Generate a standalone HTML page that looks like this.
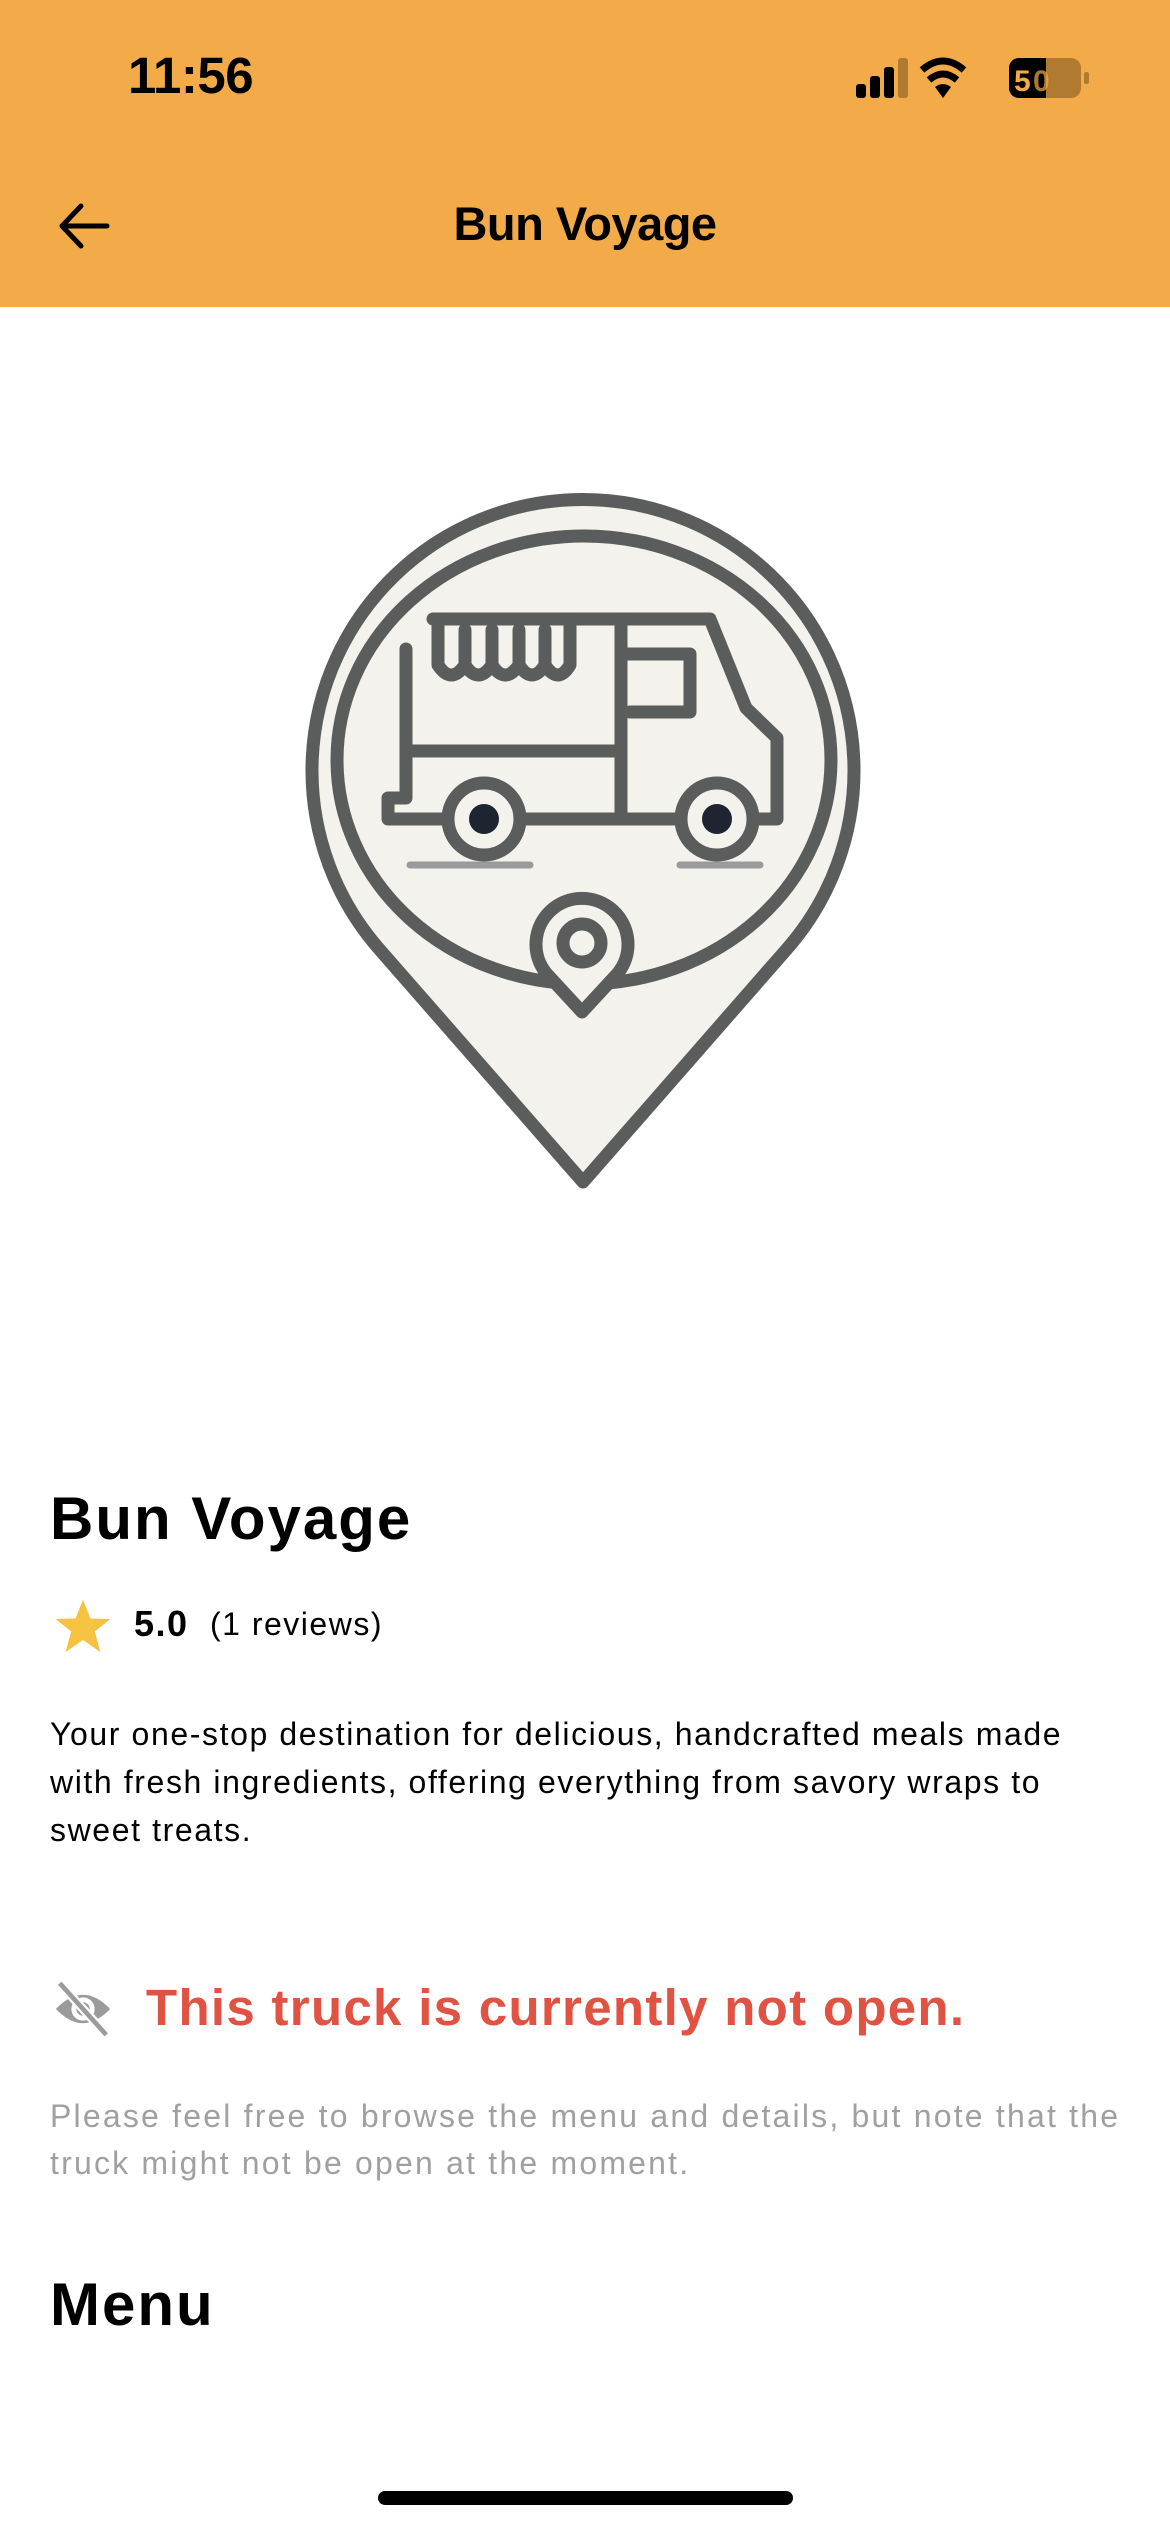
<!DOCTYPE html>
<html><head><meta charset="utf-8"><style>
*{margin:0;padding:0;box-sizing:border-box}
body{width:1170px;height:2532px;background:#fff;position:relative;overflow:hidden;font-family:"Liberation Sans",sans-serif;color:#000}
.hdr{position:absolute;left:0;top:0;width:1170px;height:307px;background:#F2AB48}
.abs{position:absolute}
</style></head><body>
<div class="hdr"></div>
<div class="abs" style="left:128px;top:46px;font-size:51px;font-weight:bold;letter-spacing:-0.5px">11:56</div>
<svg class="abs" style="left:850px;top:54px" width="250" height="50" viewBox="0 0 250 50">
 <rect x="6" y="30" width="10" height="14" rx="3" fill="#000"/>
 <rect x="20" y="22" width="10" height="22" rx="3" fill="#000"/>
 <rect x="34" y="13" width="10" height="31" rx="3" fill="#000"/>
 <rect x="48" y="4" width="10" height="40" rx="3" fill="#b07a30"/>
 <path d="M93 44 L85 33 Q93 27 101 33 Z" fill="#000"/>
 <path d="M79 26 Q93 14 107 26" stroke="#000" stroke-width="7" fill="none"/>
 <path d="M72 16 Q93 -2 114 16" stroke="#000" stroke-width="7" fill="none"/>
 <rect x="159" y="4" width="72" height="40" rx="10" fill="#b07a30"/>
 <path d="M169 4 H196 V44 H169 A10 10 0 0 1 159 34 V14 A10 10 0 0 1 169 4Z" fill="#000"/>
 <rect x="234" y="18" width="5" height="12" rx="2" fill="#b07a30"/>
 <text x="164" y="37" font-family="Liberation Sans" font-weight="bold" font-size="30" fill="#F2AB48">5</text>
 <text x="183" y="37" font-family="Liberation Sans" font-weight="bold" font-size="30" fill="#F2AB48" opacity=".7">0</text>
</svg>
<svg class="abs" style="left:55px;top:198px" width="60" height="56" viewBox="0 0 60 56">
 <path d="M52 28 H8 M26 8 L7 28 L26 48" stroke="#000" stroke-width="5" fill="none" stroke-linecap="round" stroke-linejoin="round"/>
</svg>
<div class="abs" style="left:0;width:1170px;top:196px;text-align:center;font-size:47px;font-weight:bold;letter-spacing:-0.5px">Bun Voyage</div>

<svg class="abs" style="left:280px;top:480px" width="600" height="720" viewBox="0 0 600 720">
 <g stroke="#5b5c5c" stroke-width="13" fill="none" stroke-linecap="round" stroke-linejoin="round">
  <path d="M303 702 L100 470 A271 271 0 1 1 506 470 Z" fill="#f3f2ed"/>
  <ellipse cx="304" cy="280" rx="247" ry="224"/>
  <path d="M153 139 H430 L466 228 L497 258 V339 H475 M399 339 H243 M165 339 H108 V318 H126 V169"/>
  <path d="M126 271 H341 M341 139 V339 M346 174 H410 V232 H350"/>
  <path d="M158 139 V185 Q171 205 185 185 V150 M185 185 Q198 205 212 185 V150 M212 185 Q225 205 239 185 V150 M239 185 Q252 205 265 185 V150 M265 185 Q278 205 290 185 V139"/>
  <circle cx="204" cy="339" r="36" fill="#f3f2ed"/>
  <circle cx="437" cy="339" r="36" fill="#f3f2ed"/>
  <path d="M302 532 L266 493 A46 46 0 1 1 338 493 Z" fill="#f3f2ed"/>
  <circle cx="302" cy="463" r="19"/>
 </g>
 <circle cx="204" cy="339" r="15" fill="#1e2530"/>
 <circle cx="437" cy="339" r="15" fill="#1e2530"/>
 <path d="M130 385 H250 M400 385 H480" stroke="#9a9a9a" stroke-width="7" stroke-linecap="round"/>
</svg>

<div class="abs" style="left:50px;top:1484px;font-size:60px;font-weight:bold;letter-spacing:2px">Bun Voyage</div>
<svg class="abs" style="left:52px;top:1596px" width="62" height="60" viewBox="0 0 24 24"><path d="M12 1.5 L15 9 L23 9.2 L16.7 14.2 L19 22.5 L12 17.6 L5 22.5 L7.3 14.2 L1 9.2 L9 9Z" fill="#F5C242"/></svg>
<div class="abs" style="left:134px;top:1603px;font-size:36px;font-weight:bold;letter-spacing:1.5px">5.0</div>
<div class="abs" style="left:210px;top:1606px;font-size:32px;letter-spacing:1.5px">(1 reviews)</div>
<div class="abs" style="left:50px;top:1710px;width:1085px;font-size:32px;line-height:48px;letter-spacing:1.6px">Your one-stop destination for delicious, handcrafted meals made with fresh ingredients, offering everything from savory wraps to sweet treats.</div>

<svg class="abs" style="left:48px;top:1978px" width="70" height="62" viewBox="0 0 24 24">
 <path d="M1.5 12 Q12 1 22.5 12 Q12 23 1.5 12Z" fill="#9b9b9b"/>
 <circle cx="12" cy="12" r="4.5" fill="#fff"/><circle cx="12" cy="12" r="2.6" fill="#9b9b9b"/>
 <path d="M3 2 L21 22" stroke="#fff" stroke-width="3.5"/>
 <path d="M3 2 L21 22" stroke="#9b9b9b" stroke-width="1.8"/>
</svg>
<div class="abs" style="left:146px;top:1978px;font-size:51px;font-weight:bold;color:#E05242;letter-spacing:1.3px">This truck is currently not open.</div>
<div class="abs" style="left:50px;top:2093px;width:1100px;font-size:32px;line-height:47px;color:#a0a0a0;letter-spacing:2.2px">Please feel free to browse the menu and details, but note that the truck might not be open at the moment.</div>
<div class="abs" style="left:50px;top:2270px;font-size:60px;font-weight:bold;letter-spacing:2px">Menu</div>
<div class="abs" style="left:378px;top:2491px;width:415px;height:14px;border-radius:7px;background:#000"></div>
</body></html>
